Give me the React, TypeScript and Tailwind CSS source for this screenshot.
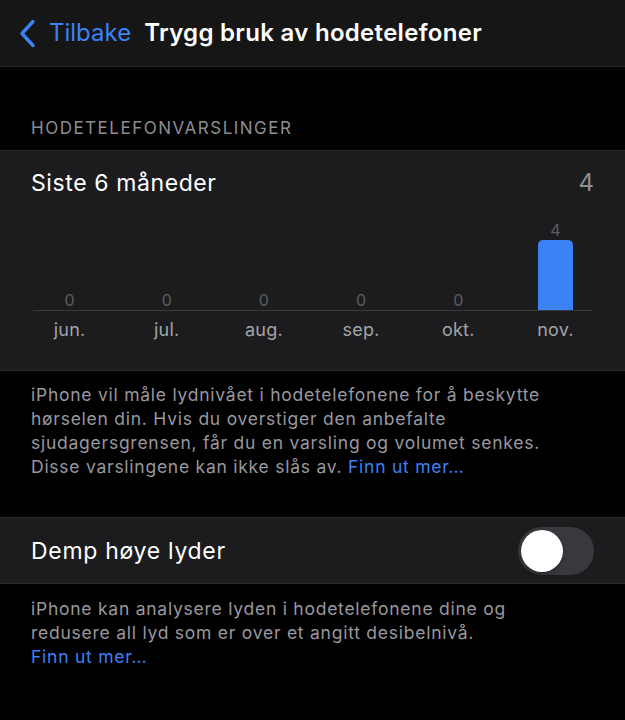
import React from 'react';

const months = [
  { label: 'jun.', value: 0 },
  { label: 'jul.', value: 0 },
  { label: 'aug.', value: 0 },
  { label: 'sep.', value: 0 },
  { label: 'okt.', value: 0 },
  { label: 'nov.', value: 4 },
];

const BackChevron: React.FC = () => (
  <svg width="17" height="29" viewBox="0 0 17 29" fill="none">
    <path d="M14 2.5 L3 14.5 L14 26.5" stroke="#3b82f6" strokeWidth="3.4" strokeLinecap="round" strokeLinejoin="round" />
  </svg>
);

const App: React.FC = () => {
  return (
    <div className="min-h-[720px] w-full bg-black font-['Inter','Liberation_Sans',sans-serif] antialiased">
      {/* Navigation bar */}
      <div className="flex h-[67px] items-center border-b border-[#262628] bg-[#161616] pl-[19px]">
        <BackChevron />
        <span className="ml-[13px] text-[24px] leading-none text-[#3b82f6]">Tilbake</span>
        <span className="ml-[13px] text-[24px] font-semibold leading-none tracking-[0.3px] text-white">
          Trygg bruk av hodetelefoner
        </span>
      </div>

      {/* Section header */}
      <div className="px-[31px] pt-[51px] pb-[12px] text-[17px] leading-[20px] tracking-[1.5px] text-[#8d8d92]">
        HODETELEFONVARSLINGER
      </div>

      {/* Chart card */}
      <div className="border-y border-[#2a2a2c] bg-[#1c1c1e] pt-[18px] pb-[29px]">
        <div className="flex items-center justify-between px-[31px]">
          <span className="text-[23px] leading-[28px] tracking-[0.6px] text-white">Siste 6 måneder</span>
          <span className="text-[24px] leading-[28px] text-[#8e8e93]">4</span>
        </div>

        <div className="mt-[23px] grid h-[90px] grid-cols-6 items-end px-[21px]">
          {months.map((m) => (
            <div key={m.label} className="flex flex-col items-center justify-end">
              <span className="text-[16px] leading-[20px] text-[#5c5c60]">{m.value}</span>
              {m.value > 0 && <div className="h-[70px] w-[35px] rounded-t-[5px] bg-[#3b82f6]" />}
            </div>
          ))}
        </div>
        <div className="mx-[33px] h-px bg-[#3a3a3c]" />

        <div className="mt-[8px] grid grid-cols-6 px-[21px]">
          {months.map((m) => (
            <span key={m.label} className="text-center text-[18px] leading-[22px] tracking-[0.2px] text-[#a3a3a8]">
              {m.label}
            </span>
          ))}
        </div>
      </div>

      <p className="whitespace-nowrap px-[31px] pt-[12px] text-[17.5px] leading-[24px] tracking-[0.75px] text-[#98989e]">
        iPhone vil måle lydnivået i hodetelefonene for å beskytte
        <br />
        hørselen din. Hvis du overstiger den anbefalte
        <br />
        sjudagersgrensen, får du en varsling og volumet senkes.
        <br />
        Disse varslingene kan ikke slås av. <span className="text-[#3b82f6]">Finn ut mer…</span>
      </p>

      {/* Toggle row */}
      <div className="mt-[38px] flex h-[67px] items-center justify-between border-y border-[#2a2a2c] bg-[#1c1c1e] px-[31px]">
        <span className="text-[23px] leading-[28px] tracking-[0.7px] text-white">Demp høye lyder</span>
        <div className="flex h-[48px] w-[76px] items-center rounded-full bg-[#39393d] p-[3px]">
          <div className="h-[42px] w-[42px] rounded-full bg-white shadow-[0_2px_4px_rgba(0,0,0,0.3)]" />
        </div>
      </div>

      <p className="whitespace-nowrap px-[31px] pt-[13px] text-[17.5px] leading-[24px] tracking-[0.75px] text-[#98989e]">
        iPhone kan analysere lyden i hodetelefonene dine og
        <br />
        redusere all lyd som er over et angitt desibelnivå.
        <br />
        <span className="text-[#3b82f6]">Finn ut mer…</span>
      </p>
    </div>
  );
};

export default App;
